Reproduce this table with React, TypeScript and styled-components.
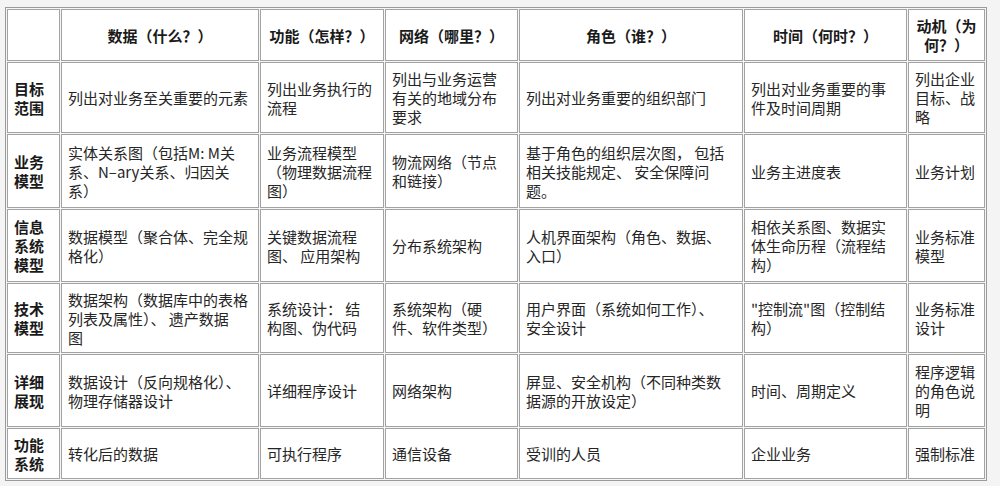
import React, { FC } from 'react';
import styled, { createGlobalStyle } from 'styled-components';

const GlobalStyle = createGlobalStyle`
    html, body {
        margin: 0;
        padding: 0;
        background: #f4f4f4;
    }
    body {
        font-family: "Noto Sans CJK SC", "Noto Sans", sans-serif;
    }
`;

const Page = styled.div`
    width: 1000px;
    height: 486px;
    padding: 7px 0 0 5px;
    box-sizing: border-box;
`;

const Table = styled.div`
    display: inline-grid;
    grid-template-columns: 53px 198px 124px 133px 224px 163px 77px;
    grid-template-rows: 52px 71px 74px 73px 70px 73px 51px;
    gap: 1px;
    padding: 1px;
    border: 1px solid #9a9a9a;
    background: #f6f6f6;
`;

const Cell = styled.div<{ $head?: boolean; $center?: boolean }>`
    display: flex;
    flex-direction: column;
    justify-content: center;
    align-items: ${p => (p.$center ? 'center' : 'flex-start')};
    text-align: ${p => (p.$center ? 'center' : 'left')};
    padding: 0 6px;
    border: 1px solid #a2a2a2;
    background: #fff;
    color: ${p => (p.$head ? '#1a1a1a' : '#262626')};
    font-size: 15px;
    line-height: 19px;
    font-weight: ${p => (p.$head ? 700 : 400)};
    white-space: nowrap;
    overflow: hidden;
`;

const Line = styled.span`
    display: block;
`;

const header = ['', '数据（什么？）', '功能（怎样？）', '网络（哪里？）', '角色（谁？）', '时间（何时？）', '动机（为\n何？）'];

const rows: string[][] = [
    ['目标\n范围', '列出对业务至关重要的元素', '列出业务执行的\n流程', '列出与业务运营\n有关的地域分布\n要求', '列出对业务重要的组织部门', '列出对业务重要的事\n件及时间周期', '列出企业\n目标、战\n略'],
    ['业务\n模型', '实体关系图（包括M: M关\n系、N–ary关系、归因关\n系）', '业务流程模型\n（物理数据流程\n图）', '物流网络（节点\n和链接）', '基于角色的组织层次图， 包括\n相关技能规定、 安全保障问\n题。', '业务主进度表', '业务计划'],
    ['信息\n系统\n模型', '数据模型（聚合体、完全规\n格化）', '关键数据流程\n图、 应用架构', '分布系统架构', '人机界面架构（角色、数据、\n入口）', '相依关系图、数据实\n体生命历程（流程结\n构）', '业务标准\n模型'],
    ['技术\n模型', '数据架构（数据库中的表格\n列表及属性）、 遗产数据\n图', '系统设计： 结\n构图、伪代码', '系统架构（硬\n件、软件类型）', '用户界面（系统如何工作）、\n安全设计', '"控制流"图（控制结\n构）', '业务标准\n设计'],
    ['详细\n展现', '数据设计（反向规格化）、\n物理存储器设计', '详细程序设计', '网络架构', '屏显、安全机构（不同种类数\n据源的开放设定）', '时间、周期定义', '程序逻辑\n的角色说\n明'],
    ['功能\n系统', '转化后的数据', '可执行程序', '通信设备', '受训的人员', '企业业务', '强制标准'],
];

const Text: FC<{ value: string }> = ({ value }) => (
    <>
        {value.split('\n').map((l, i) => (
            <Line key={i}>{l}</Line>
        ))}
    </>
);

export default function App() {
    return (
        <Page>
            <GlobalStyle />
            <Table>
                {header.map((h, i) => (
                    <Cell key={'h' + i} $head $center>
                        <Text value={h} />
                    </Cell>
                ))}
                {rows.map((row, r) =>
                    row.map((c, i) => (
                        <Cell key={r + '-' + i} $head={i === 0}>
                            <Text value={c} />
                        </Cell>
                    ))
                )}
            </Table>
        </Page>
    );
}
